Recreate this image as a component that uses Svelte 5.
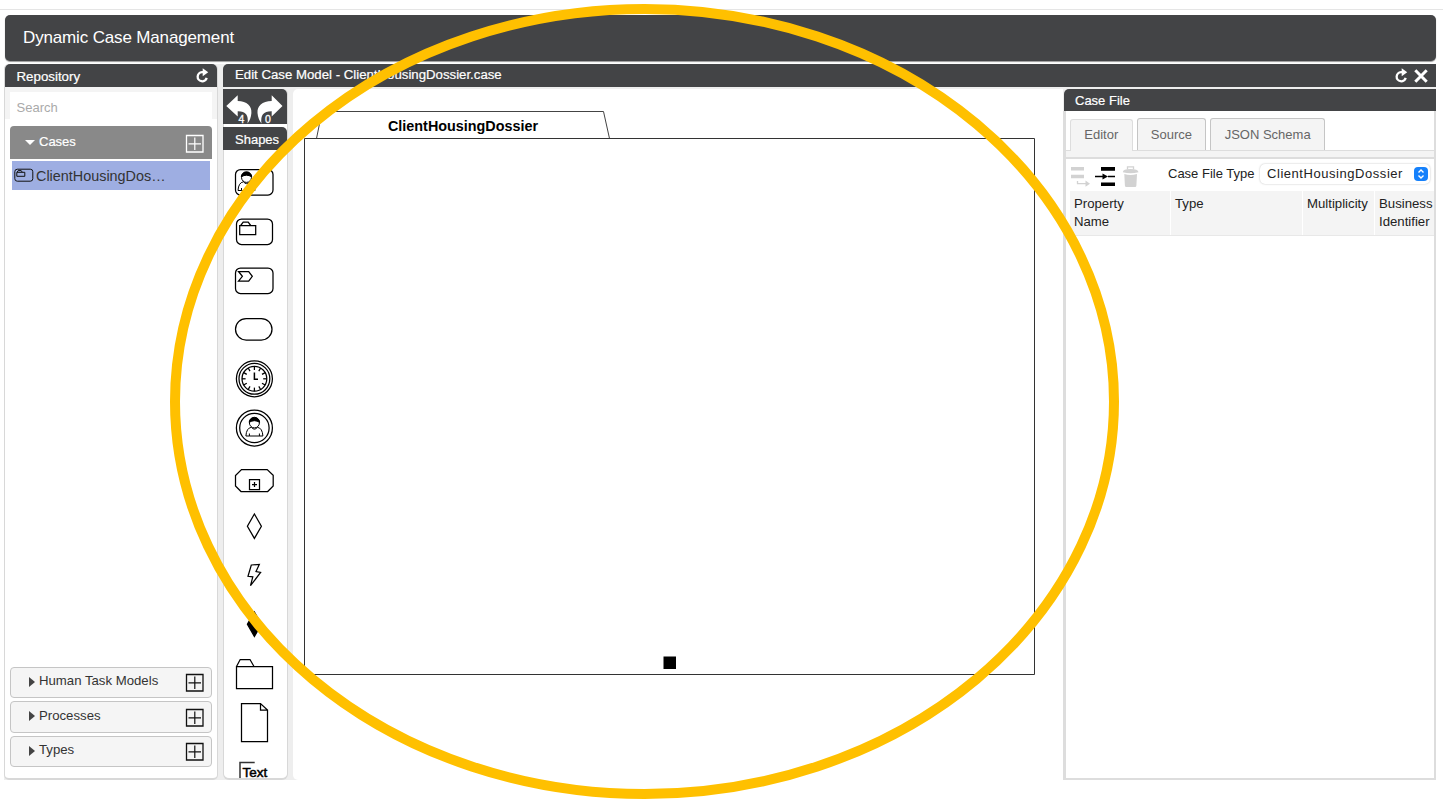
<script>
  const sections = ['Human Task Models', 'Processes', 'Types'];
  const tabs = ['Editor', 'Source', 'JSON Schema'];
  const columns = ['Property Name', 'Type', 'Multiplicity', 'Business Identifier'];
  const ticks = Array.from({ length: 12 }, (_, i) => i * 30);
</script>

{#snippet plus()}
  <svg class="plus" width="19" height="19" viewBox="0 0 19 19" fill="none" stroke="currentColor">
    <path d="M1.500 1.500h16.500v16.500H1.500z" stroke-width="1.300" />
    <path d="M9.800 3.500v12.500M3.500 9.800h12.500" stroke-width="1.200" />
  </svg>
{/snippet}

{#snippet refresh()}
  <svg width="14" height="15" viewBox="0 0 14 15" fill="none" stroke="#fff" stroke-width="2.300">
    <path d="M9 4.100H7A4.600 4.600 0 1 0 11.700 9.900" />
    <path d="M7.700 .3l5.500 3.900-5.500 4z" fill="#fff" stroke="none" />
  </svg>
{/snippet}

{#snippet person(x, y)}
  <g transform="translate({x} {y})" stroke-width="1">
    <circle cx="0" cy="-5.600" r="5" />
    <path d="M-5.200-6.200a5.200 5 0 0 1 10.400 0Q0-9.400-5.200-6.200z" fill="#000" />
    <path d="M-3-1.200Q-8-.5-8.500 7.500H-5V5M-5 7.500H8.500Q8-.5 3-1.200M-3-1.200Q0 2.500 3-1.200M5 7.500V5" />
  </g>
{/snippet}

<div class="page">
  <div class="topline"></div>
  <header>Dynamic Case Management</header>

  <main>
    <aside>
      <div class="bar repo"><span>Repository</span>{@render refresh()}</div>
      <div class="search"><div>Search</div></div>
      <div class="cases"><i class="down"></i><span>Cases</span>{@render plus()}</div>
      <div class="selected">
        <svg width="20" height="15" viewBox="0 0 20 15" fill="none" stroke="#111">
          <rect x=".8" y="1.200" width="18" height="12" rx="2.500" />
          <path d="M2.800 4.300h8v4h-8zM3.200 4.100l1-1.500h3l1 1.500" />
        </svg>
        <span>ClientHousingDos…</span>
      </div>
      <div class="sections">
        {#each sections as s}
          <div class="section"><i></i><span>{s}</span>{@render plus()}</div>
        {/each}
      </div>
    </aside>

    <section class="editor">
      <div class="bar title">
        <span>Edit Case Model - ClientHousingDossier.case</span>
        {@render refresh()}
        <svg class="close" width="14" height="14" viewBox="0 0 14 14" stroke="#fff" stroke-width="3"><path d="M1.300 1.300l11.400 11.400M12.700 1.300L1.300 12.700" /></svg>
      </div>
      <div class="work">
        <div class="tools">
          <div class="undo">
            <svg width="64" height="35" viewBox="0 0 64 35" fill="#fff">
              <path d="M3.300 17L14.700 6.300V12C24 12 29 17 28.400 24Q28 30 24.500 34.500Q26.500 22 14.700 22.200V27.500z" />
              <path d="M59.500 17L48.700 6.300V12C39 12 34 17 34.500 24Q35 30 38.500 34.500Q36.500 22 48.700 22.200V27.500z" />
              <text x="15.600" y="33.500">4</text><text x="42" y="33.500">0</text>
            </svg>
          </div>
          <div class="bar shapes">Shapes</div>
          <div class="palette">
            <svg viewBox="0 0 64 49"><rect x="12.500" y="12.500" width="37.500" height="25.500" rx="5" />{@render person(23.500, 26)}</svg>
            <svg viewBox="0 0 64 49"><rect x="13.500" y="13" width="36" height="25.500" rx="5" /><path d="M16.700 19.500h16v9h-16zM17.700 19.500l2.500-3.300h5l2.500 3.300" /></svg>
            <svg viewBox="0 0 64 49"><rect x="12.500" y="13" width="37.500" height="25.500" rx="5" /><path d="M15.500 16.500h10.200l3.600 4.800-3.600 4.900H15.500l3.900-4.900z" /></svg>
            <svg viewBox="0 0 64 49"><rect x="12.500" y="14.500" width="36.500" height="21.500" rx="10.700" /></svg>
            <svg viewBox="0 0 64 49">
              <circle cx="31.400" cy="25.800" r="18" /><circle cx="31.400" cy="25.800" r="15.400" /><circle cx="31.400" cy="25.800" r="12.400" />
              {#each ticks as a}<path d="M31.400 13.400v3.600" transform="rotate({a} 31.400 25.800)" />{/each}
              <path d="M31.400 19.500v6.800h3.600" stroke-width="1.500" />
            </svg>
            <svg viewBox="0 0 64 49"><circle cx="31.400" cy="26" r="18" /><circle cx="31.400" cy="26" r="14.700" />{@render person(31.400, 26.500)}</svg>
            <svg viewBox="0 0 64 49"><path d="M18.500 18.500h25.700l6 5.800V35l-5.500 5.500H18L12.500 35V24.500zM26.500 28.500h10v10h-10zM31.500 31v5M29 33.500h5" /></svg>
            <svg viewBox="0 0 64 49"><path d="M31.400 14l7 12.200-7 12.200-7-12.200z" /></svg>
            <svg viewBox="0 0 64 49"><path d="M28.300 16l8-.6-3.300 7.200 4.600.9-10.100 13.200 2.300-8.800-4.800-.6z" /></svg>
            <svg viewBox="0 0 64 49"><path d="M31.400 14l7 12.200-7 12.200-7-12.200z" fill="#000" /></svg>
            <svg viewBox="0 0 64 49"><path d="M13.500 19.500h36v22h-36zM13.500 19.500l3.700-7H27l4 7" /></svg>
            <svg viewBox="0 0 64 49"><path d="M18.500 7.500h19l7 6.500v31.500h-26zM37.500 7.500V14h7" /></svg>
            <svg class="last" viewBox="0 0 64 33"><path d="M31.700 17.500H17v15.500" stroke="#333" stroke-width="1.500" /><text x="19.600" y="32">Text</text></svg>
          </div>
        </div>

        <div class="canvas">
          <svg width="770" height="691" viewBox="293 89 770 691" fill="#fff" stroke="#333">
            <path d="M316.500 138.500l5.500-27h281.500l6 27" stroke="#444" />
            <path d="M304.500 138.500h730v536h-730z" />
            <rect x="663.500" y="656.500" width="12.500" height="12.500" fill="#000" stroke="none" />
            <text x="388" y="130.500">ClientHousingDossier</text>
          </svg>
        </div>

        <div class="casefile">
          <div class="bar cf">Case File</div>
          <div class="body">
            <div class="tabs">{#each tabs as t, i}<div class="tab" class:active={i === 0}>{t}</div>{/each}</div>
            <div class="strip"></div>
            <div class="toolbar">
              <svg width="72" height="24" viewBox="0 0 72 24">
                <g fill="#d2d2d2"><path d="M1 3h13v3.500H1zM1 10.800h13v3.400H1zM54.300 10q6 1.800 12.700 0l-.6 11.500q0 1.500-1.500 1.500h-8.500q-1.500 0-1.500-1.500z" /><path d="M15.500 16.500l4.500 3.200-4.500 3z" /><path d="M52.800 8.200Q53 5 60.500 5t8 3.200q-7.800 2-15.700 0z" /></g>
                <path d="M7.500 17v2.700h9M57.500 5.500V2.800h6v2.700" fill="none" stroke="#d2d2d2" stroke-width="1.300" />
                <path d="M31 3h14v3.800H31zM31 18.500h14V22H31zM32.500 9.500l5.500 3-5.500 3z" /><path d="M25 12.500h9M38 12.500h7" stroke="#000" stroke-width="1.300" />
              </svg>
              <span>Case File Type</span>
              <div class="select">ClientHousingDossier
                <b><svg width="14" height="14" viewBox="0 0 14 14" fill="none" stroke="#fff" stroke-width="1.400"><path d="M4.500 5.500L7 3l2.500 2.500M4.500 8.500L7 11l2.500-2.500" /></svg></b>
              </div>
            </div>
            <div class="thead">{#each columns as c}<div>{c}</div>{/each}</div>
          </div>
        </div>
      </div>
    </section>
  </main>

  <svg class="highlight" width="1443" height="802" viewBox="0 0 1443 802"><ellipse cx="644.500" cy="401.500" rx="469.500" ry="392.500" /></svg>
</div>

<style>
  :global(body) { margin: 0; background: #fff; }
  .page { position: relative; width: 1443px; height: 802px; overflow: hidden; box-sizing: border-box; font: 13.2px/18px "Liberation Sans", Arial, sans-serif; color: #333; }
  .page * { box-sizing: border-box; }
  svg { display: block; flex: none; }
  .topline { height: 10px; border-bottom: 1px solid #e5e5e5; }
  header { margin: 5px 7px 0 5px; height: 46px; border-radius: 5px; background: #434446; color: #fff; font-size: 17px; letter-spacing: -.15px; line-height: 46px; padding-left: 18px; box-shadow: 0 1px 1px #999; }
  main { display: flex; gap: 5px; margin: 3px 7px 0 4px; height: 716px; background: #eee; border-radius: 5px 5px 0 0; }
  .bar { background: #434446; color: #fff; display: flex; align-items: center; flex: none; -webkit-text-stroke: .2px #fff; }
  aside { width: 214px; background: #fff; border: 1px solid #d8d8d8; border-bottom-width: 2px; border-top: 0; border-radius: 5px; display: flex; flex-direction: column; }
  .repo { height: 23px; border-radius: 5px 5px 0 0; padding: 2px 8px 0 11.500px; justify-content: space-between; font-size: 13.300px; }
  .repo svg { margin-top: -3px; }
  .search { height: 32px; background: #f4f4f4; padding: 5px 5px 0; }
  .search div { background: #fff; height: 27px; line-height: 31px; padding-left: 6.500px; color: #aaa; font-size: 13px; }
  .cases { margin: 7px 5px 0; height: 33px; background: #898989; color: #fff; border-radius: 4px 4px 0 0; display: flex; align-items: center; padding: 0 8px 0 14.500px; font-size: 13px; -webkit-text-stroke: .2px #fff; }
  .cases span, .section span { flex: 1; padding-bottom: 1px; }
  .section span { padding-bottom: 2px; }
  .plus { margin-top: 1px; }
  .down { border: 5px solid transparent; border-top-color: #fff; border-bottom: 0; margin-right: 4.500px; }
  .selected { margin: 2px 7px 0; height: 29px; background: #9eaee2; display: flex; align-items: center; padding-left: 2px; gap: 2px; font-size: 14.400px; line-height: 32px; }
  .selected span { padding-top: 1px; }
  .sections { margin: auto 5px 11px; display: flex; flex-direction: column; gap: 3px; }
  .section { height: 31.500px; border: 1px solid #c5c5c5; border-radius: 4px; background: #f5f5f5; display: flex; align-items: center; padding: 0 7px 0 18px; }
  .section i { border: 5px solid transparent; border-left: 6px solid #444; border-right: 0; margin: 0 4px 1px 0; }
  .section .plus { color: #111; margin-top: 1px; }
  .editor { flex: 1; display: flex; flex-direction: column; min-width: 0; }
  .title { height: 23px; border-radius: 5px 0 0 0; padding: 0 8px 0 12px; font-size: 13.230px; }
  .title span { flex: 1; padding-bottom: 1px; }
  .close { margin-left: 6px; }
  .work { border-top: 2px solid #eee; flex: 1; display: flex; min-height: 0; }
  .tools { width: 65px; background: #fff; border: 1px solid #d8d8d8; border-width: 0 1px 2px; border-radius: 0 5px 6px 6px; display: flex; flex-direction: column; }
  .undo { height: 35px; margin-left: -1px; width: 64px; border-radius: 0 5px 0 0; background: #434446; flex: none; }
  .undo text { font: 10.500px "Liberation Sans"; stroke: #fff; stroke-width: .3; }
  .shapes { height: 23px; margin: 3px 0 0 -1px; padding: 2px 0 0 12px; width: 64px; border-radius: 0 5px 0 0; font-size: 13px; }
  .palette { padding-top: 7px; margin-left: -1px; flex: 1; min-height: 0; }
  .palette svg { width: 64px; height: 49px; fill: none; stroke: #000; stroke-width: 1.250; }
  .palette .last { height: 33px; overflow: visible; }
  .palette text { font: 13.500px "Liberation Sans"; fill: #000; stroke-width: .5; }
  .canvas { width: 770px; margin-left: 5px; background: #fff; flex: none; border-radius: 5px 0 0 5px; }
  .canvas text { font: bold 14.360px "Liberation Sans"; fill: #000; stroke: none; }
  .casefile { flex: 1; display: flex; flex-direction: column; min-width: 0; }
  .cf { height: 22px; padding: 1px 0 0 11px; margin-left: 1px; border-radius: 5px 0 0 0; font-size: 13px; }
  .body { flex: 1; background: #fff; border: solid #ddd; border-width: 0 2px 2px 3px; }
  .tabs { display: flex; align-items: flex-end; gap: 4px; height: 40px; padding-left: 4px; border-bottom: 1px solid #ddd; }
  .tab { height: 32px; line-height: 32px; border: 1px solid #c5c5c5; border-bottom: 0; border-radius: 3px 3px 0 0; background: #f4f4f4; color: #666; padding: 0 13.300px; font-size: 13px; }
  .active { border-color: #ddd; height: 32px; margin-bottom: -1px; line-height: 30px; }
  .strip { height: 8px; background: #f4f4f4; border-bottom: 2px solid #ddd; }
  .toolbar { height: 32px; display: flex; align-items: center; padding: 0 4px 2px 4px; font-size: 13px; color: #222; }
  .toolbar > svg { margin-top: 4px; }
  .toolbar span { margin-left: 26px; flex: 1; white-space: nowrap; }
  .select { width: 170px; height: 20px; border-radius: 5px; box-shadow: 0 0 2px #bbb; padding: 0 2px 0 7px; display: flex; justify-content: space-between; align-items: center; letter-spacing: .55px; }
  .select b { width: 14px; height: 14px; border-radius: 4px; background: #1681fb; }
  .thead { display: grid; grid-template-columns: 101px 132px 72px 1fr; margin-left: 3px; height: 45px; background: #f4f4f4; border-bottom: 1px solid #e8e8e8; padding-top: 4px; color: #222; }
  .thead div { padding-left: 4px; border-left: 1px solid #fff; margin-top: -4px; padding-top: 4px; }
  .thead div:first-child { padding-right: 30px; }
  .highlight { position: absolute; left: 0; top: 0; pointer-events: none; fill: none; stroke: #ffc000; stroke-width: 10; }
</style>
